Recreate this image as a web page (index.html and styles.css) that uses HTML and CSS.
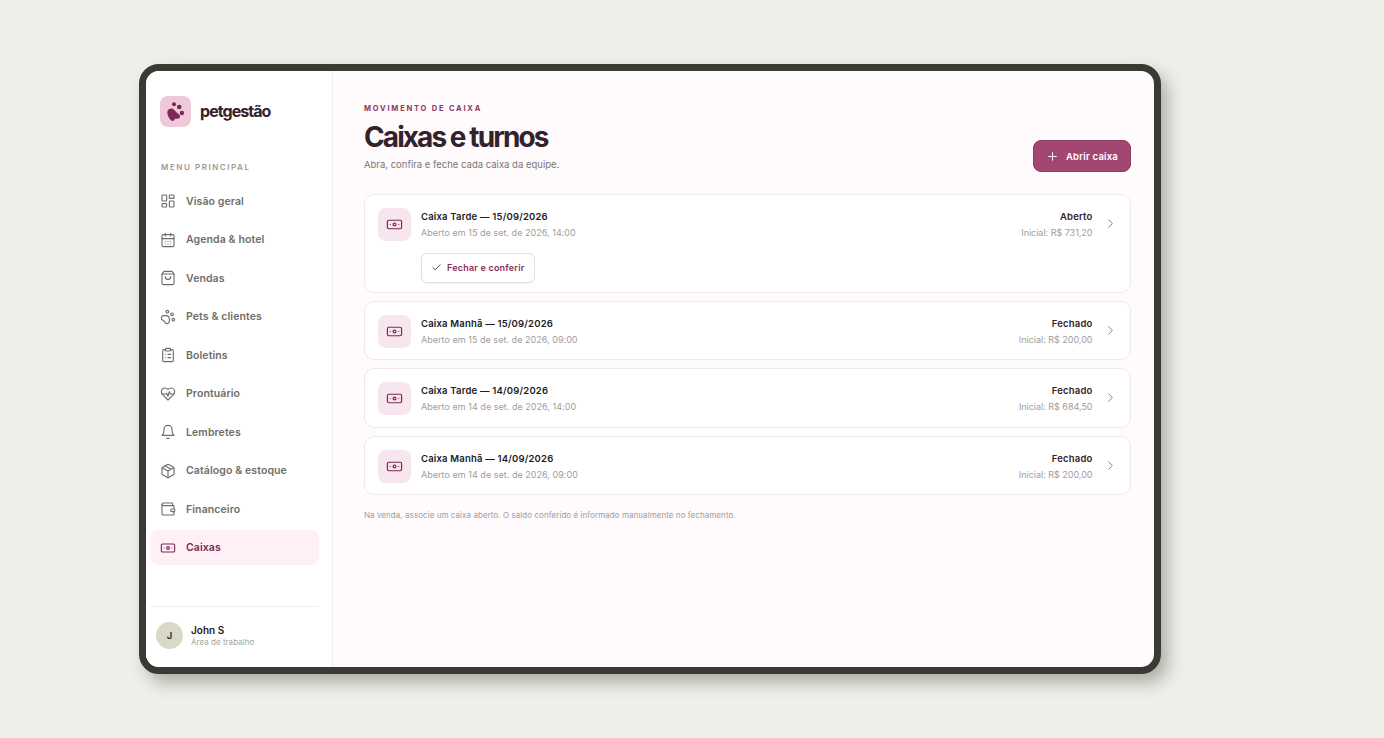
FILE: index.html
```html
<!DOCTYPE html>
<html lang="pt-BR">
<head>
  <meta charset="UTF-8" />
  <meta name="viewport" content="width=device-width, initial-scale=1.0"/>
  <title>Caixas e turnos - petgestão</title>
  <link rel="stylesheet" href="styles.css">
</head>
<body>

<svg class="sprite" width="0" height="0">
  <symbol id="i-cash" viewBox="0 0 24 24">
    <rect x="2" y="6" width="20" height="12" rx="2"/>
    <circle cx="12" cy="12" r="2"/>
    <path d="M6 12h.01M18 12h.01"/>
  </symbol>
</svg>

<div class="device">
  <aside class="sidebar">
    <div class="brand">
      <div class="brand-logo">
        <svg viewBox="0 0 31 31" width="31" height="31">
          <path class="paw" d="M7.3 16.5c0-2.5 2-3.9 4-3.9 2.6 0 3.9 2.7 5.6 4.2 1.2 1 3.1 1.8 3.1 3.8 0 1.6-1.2 2.2-2.6 2.2-1.3 0-1.9-.3-2.6.4-.8.7-.6 1.7-2 1.7-2.2 0-5.5-4.5-5.5-8.4z"/>
          <circle class="paw" cx="14" cy="8.3" r="2"/>
          <circle class="paw" cx="19.2" cy="11" r="2.3"/>
          <circle class="paw" cx="21.9" cy="17" r="2.2"/>
        </svg>
      </div>
      <span class="brand-name">petgestão</span>
    </div>

    <div class="nav-title">MENU PRINCIPAL</div>

    <nav class="nav">
      <a class="nav-item">
        <svg class="icon" viewBox="0 0 24 24"><rect x="3" y="3" width="7" height="9" rx="1"/><rect x="14" y="3" width="7" height="5" rx="1"/><rect x="14" y="12" width="7" height="9" rx="1"/><rect x="3" y="16" width="7" height="5" rx="1"/></svg>
        Visão geral
      </a>
      <a class="nav-item">
        <svg class="icon" viewBox="0 0 24 24"><path d="M8 2v4M16 2v4"/><rect x="3" y="4" width="18" height="18" rx="2"/><path d="M3 10h18M8 14h.01M12 14h.01M16 14h.01M8 18h.01M12 18h.01M16 18h.01"/></svg>
        Agenda &amp; hotel
      </a>
      <a class="nav-item">
        <svg class="icon" viewBox="0 0 24 24"><path d="M6 2 3 6v14a2 2 0 0 0 2 2h14a2 2 0 0 0 2-2V6l-3-4z"/><path d="M3 6h18M16 10a4 4 0 0 1-8 0"/></svg>
        Vendas
      </a>
      <a class="nav-item">
        <svg class="icon" viewBox="0 0 24 24"><circle cx="11" cy="4" r="2"/><circle cx="18" cy="8" r="2"/><circle cx="20" cy="16" r="2"/><path d="M9 10a5 5 0 0 1 5 5v3.5a3.5 3.5 0 0 1-6.84 1.045Q6.52 17.48 4.46 16.84A3.5 3.5 0 0 1 5.5 10z"/></svg>
        Pets &amp; clientes
      </a>
      <a class="nav-item">
        <svg class="icon" viewBox="0 0 24 24"><rect x="8" y="2" width="8" height="4" rx="1"/><path d="M16 4h2a2 2 0 0 1 2 2v14a2 2 0 0 1-2 2H6a2 2 0 0 1-2-2V6a2 2 0 0 1 2-2h2"/><path d="M12 11h4M12 16h4M8 11h.01M8 16h.01"/></svg>
        Boletins
      </a>
      <a class="nav-item">
        <svg class="icon" viewBox="0 0 24 24"><path d="M19 14c1.49-1.46 3-3.21 3-5.5A5.5 5.5 0 0 0 16.5 3c-1.76 0-3 .5-4.5 2-1.5-1.5-2.74-2-4.5-2A5.5 5.5 0 0 0 2 8.5c0 2.3 1.5 4.05 3 5.5l7 7z"/><path d="M3.22 12H9.5l.5-1 2 4.5 2-7 1.5 3.5h5.27"/></svg>
        Prontuário
      </a>
      <a class="nav-item">
        <svg class="icon" viewBox="0 0 24 24"><path d="M10.3 21a1.94 1.94 0 0 0 3.4 0"/><path d="M6 8a6 6 0 0 1 12 0c0 7 3 9 3 9H3s3-2 3-9"/></svg>
        Lembretes
      </a>
      <a class="nav-item">
        <svg class="icon" viewBox="0 0 24 24"><path d="M21 8a2 2 0 0 0-1-1.73l-7-4a2 2 0 0 0-2 0l-7 4A2 2 0 0 0 3 8v8a2 2 0 0 0 1 1.73l7 4a2 2 0 0 0 2 0l7-4A2 2 0 0 0 21 16z"/><path d="m3.3 7 8.7 5 8.7-5M12 22V12M7.5 4.27l9 5.15"/></svg>
        Catálogo &amp; estoque
      </a>
      <a class="nav-item">
        <svg class="icon" viewBox="0 0 24 24"><path d="M19 7V4a1 1 0 0 0-1-1H5a2 2 0 0 0 0 4h15a1 1 0 0 1 1 1v4h-3a2 2 0 0 0 0 4h3a1 1 0 0 0 1-1v-2a1 1 0 0 0-1-1"/><path d="M3 5v14a2 2 0 0 0 2 2h15a1 1 0 0 0 1-1v-4"/></svg>
        Financeiro
      </a>
      <a class="nav-item active">
        <svg class="icon"><use href="#i-cash"/></svg>
        Caixas
      </a>
    </nav>

    <div class="user">
      <div class="avatar">J</div>
      <div class="user-text">
        <div class="user-name">John S</div>
        <div class="user-role">Área de trabalho</div>
      </div>
    </div>
  </aside>

  <main class="main">
    <div class="page-head">
      <div class="page-text">
        <div class="eyebrow">MOVIMENTO DE CAIXA</div>
        <h1>Caixas e turnos</h1>
        <p class="subtitle">Abra, confira e feche cada caixa da equipe.</p>
      </div>
      <button class="btn-primary">
        <svg class="btn-icon" viewBox="0 0 24 24"><path d="M5 12h14M12 5v14"/></svg>
        Abrir caixa
      </button>
    </div>

    <div class="list">
      <div class="card card-open">
        <div class="card-row">
          <div class="card-icon"><svg class="icon"><use href="#i-cash"/></svg></div>
          <div class="card-info">
            <div class="card-title">Caixa Tarde — 15/09/2026</div>
            <div class="card-sub">Aberto em 15 de set. de 2026, 14:00</div>
          </div>
          <div class="card-status">
            <div class="status">Aberto</div>
            <div class="card-sub">Inicial: R$ 731,20</div>
          </div>
          <svg class="chevron" viewBox="0 0 24 24"><path d="m9 18 6-6-6-6"/></svg>
        </div>
        <button class="btn-outline">
          <svg class="check" viewBox="0 0 24 24"><path d="M20 6 9 17l-5-5"/></svg>
          Fechar e conferir
        </button>
      </div>

      <div class="card">
        <div class="card-row">
          <div class="card-icon"><svg class="icon"><use href="#i-cash"/></svg></div>
          <div class="card-info">
            <div class="card-title">Caixa Manhã — 15/09/2026</div>
            <div class="card-sub">Aberto em 15 de set. de 2026, 09:00</div>
          </div>
          <div class="card-status">
            <div class="status">Fechado</div>
            <div class="card-sub">Inicial: R$ 200,00</div>
          </div>
          <svg class="chevron" viewBox="0 0 24 24"><path d="m9 18 6-6-6-6"/></svg>
        </div>
      </div>

      <div class="card">
        <div class="card-row">
          <div class="card-icon"><svg class="icon"><use href="#i-cash"/></svg></div>
          <div class="card-info">
            <div class="card-title">Caixa Tarde — 14/09/2026</div>
            <div class="card-sub">Aberto em 14 de set. de 2026, 14:00</div>
          </div>
          <div class="card-status">
            <div class="status">Fechado</div>
            <div class="card-sub">Inicial: R$ 684,50</div>
          </div>
          <svg class="chevron" viewBox="0 0 24 24"><path d="m9 18 6-6-6-6"/></svg>
        </div>
      </div>

      <div class="card">
        <div class="card-row">
          <div class="card-icon"><svg class="icon"><use href="#i-cash"/></svg></div>
          <div class="card-info">
            <div class="card-title">Caixa Manhã — 14/09/2026</div>
            <div class="card-sub">Aberto em 14 de set. de 2026, 09:00</div>
          </div>
          <div class="card-status">
            <div class="status">Fechado</div>
            <div class="card-sub">Inicial: R$ 200,00</div>
          </div>
          <svg class="chevron" viewBox="0 0 24 24"><path d="m9 18 6-6-6-6"/></svg>
        </div>
      </div>
    </div>

    <p class="note">Na venda, associe um caixa aberto. O saldo conferido é informado manualmente no fechamento.</p>
  </main>
</div>

</body>
</html>
```

FILE: styles.css
```css
* {
  box-sizing: border-box;
}

html, body {
  height: 100%;
}

body {
  margin: 0;
  padding: 64px 0 0 139px;
  background: #edefe9;
  font-family: Inter, "Liberation Sans", sans-serif;
  overflow: hidden;
}

.sprite {
  position: absolute;
}

.device {
  display: flex;
  width: 1022px;
  height: 610px;
  border: 7px solid #3a3a35;
  border-radius: 20px;
  background: #fffafb;
  overflow: hidden;
  box-shadow: 7px 9px 16px rgba(60, 62, 50, 0.35);
}

.icon {
  width: 16px;
  height: 16px;
  flex-shrink: 0;
  fill: none;
  stroke: currentColor;
  stroke-width: 1.7;
  stroke-linecap: round;
  stroke-linejoin: round;
}

/* sidebar */
.sidebar {
  display: flex;
  flex-direction: column;
  width: 187px;
  flex-shrink: 0;
  background: #fff;
  border-right: 1px solid #f3ecee;
  padding: 25px 13px 0 4px;
}

.brand {
  display: flex;
  align-items: center;
  gap: 9px;
  padding-left: 10px;
}

.brand-logo {
  width: 31px;
  height: 31px;
  border-radius: 8px;
  background: #efc9da;
}

.paw {
  fill: #7b2a55;
}

.brand-name {
  margin-top: -2px;
  font-size: 16px;
  font-weight: 700;
  letter-spacing: -0.95px;
  color: #33222b;
}

.nav-title {
  margin-top: 35px;
  padding-left: 11px;
  font-size: 8px;
  font-weight: 600;
  letter-spacing: 1.55px;
  color: #9a9b97;
}

.nav {
  display: flex;
  flex-direction: column;
  gap: 3.5px;
  margin-top: 11.5px;
}

.nav-item {
  display: flex;
  align-items: center;
  gap: 10px;
  height: 35px;
  padding-left: 10px;
  border-radius: 8px;
  font-size: 10.5px;
  font-weight: 600;
  letter-spacing: 0.1px;
  color: #6d6e6a;
}

.nav-item.active {
  background: #fff0f5;
  color: #7b2a55;
}

.user {
  display: flex;
  align-items: center;
  gap: 8px;
  margin-top: auto;
  height: 61px;
  padding: 0 0 4px 6px;
  border-top: 1px solid #f0eeee;
}

.avatar {
  display: flex;
  align-items: center;
  justify-content: center;
  width: 27px;
  height: 27px;
  border-radius: 50%;
  background: #d8d9c6;
  font-size: 9.5px;
  font-weight: 600;
  color: #2a2a25;
}

.user-text {
  padding-top: 1px;
}

.user-name {
  font-size: 10px;
  font-weight: 600;
  color: #1d1a1c;
}

.user-role {
  margin-top: 1px;
  font-size: 8px;
  letter-spacing: 0.03px;
  color: #a3a3a0;
}

/* main */
.main {
  flex: 1;
  padding: 33px 23px 0 31px;
}

.page-head {
  display: flex;
  justify-content: space-between;
  align-items: flex-end;
}

.page-text {
  padding-bottom: 2px;
}

.eyebrow {
  font-size: 7.5px;
  font-weight: 700;
  letter-spacing: 1.8px;
  color: #8a3a63;
}

h1 {
  margin: 7px 0 0;
  font-size: 28px;
  line-height: 34px;
  font-weight: 700;
  letter-spacing: -1.92px;
  color: #33222b;
}

.subtitle {
  margin: 5px 0 0;
  font-size: 9.5px;
  color: #7b7675;
}

.btn-primary {
  display: flex;
  align-items: center;
  gap: 7px;
  width: 98px;
  height: 32px;
  padding: 0 0 0 12px;
  border: 1px solid #8a3a63;
  border-radius: 8px;
  background: #a44672;
  font-family: inherit;
  font-size: 9.5px;
  font-weight: 600;
  letter-spacing: 0.2px;
  color: #fff;
}

.btn-icon {
  width: 13px;
  height: 13px;
  fill: none;
  stroke: currentColor;
  stroke-width: 1.8;
  stroke-linecap: round;
}

.list {
  display: flex;
  flex-direction: column;
  gap: 8px;
  margin-top: 21.5px;
}

.card {
  padding: 13px 12px 11.5px 13px;
  border: 1px solid #efe9eb;
  border-radius: 10px;
  background: #fff;
}

.card-open {
  padding-bottom: 9px;
}

.card-row {
  display: flex;
  align-items: center;
  height: 33px;
}

.card-icon {
  display: flex;
  align-items: center;
  justify-content: center;
  width: 33px;
  height: 33px;
  border-radius: 8px;
  background: #f8e6ee;
  color: #7b2a55;
}

.card-icon .icon {
  width: 17px;
  height: 17px;
  stroke-width: 1.7;
}

.card-info {
  flex: 1;
  margin-left: 10px;
}

.card-title {
  font-size: 9.5px;
  font-weight: 600;
  letter-spacing: 0.19px;
  color: #211c1f;
}

.card-sub {
  margin-top: 5px;
  font-size: 9px;
  letter-spacing: 0.03px;
  color: #a09d9c;
}

.card-status {
  text-align: right;
}

.card-status .card-sub {
  letter-spacing: -0.02px;
}

.status {
  font-size: 9.5px;
  font-weight: 600;
  letter-spacing: 0.19px;
  color: #33222b;
}

.chevron {
  width: 15px;
  height: 15px;
  margin: -2px 0 0 10.5px;
  fill: none;
  stroke: #85838a;
  stroke-width: 1.6;
  stroke-linecap: round;
  stroke-linejoin: round;
}

.btn-outline {
  display: flex;
  align-items: center;
  gap: 5px;
  height: 30px;
  margin: 12px 0 0 43px;
  padding: 0 9px;
  border: 1px solid #e5dde0;
  border-radius: 6px;
  background: #fff;
  box-shadow: 0 1px 1px rgba(0, 0, 0, 0.05);
  font-family: inherit;
  font-size: 9px;
  font-weight: 600;
  letter-spacing: 0.2px;
  color: #8a2f5c;
}

.check {
  width: 11px;
  height: 11px;
  fill: none;
  stroke: #33222b;
  stroke-width: 1.8;
  stroke-linecap: round;
  stroke-linejoin: round;
}

.note {
  margin: 14.5px 0 0;
  font-size: 8px;
  letter-spacing: 0.06px;
  color: #a09d9c;
}
```
